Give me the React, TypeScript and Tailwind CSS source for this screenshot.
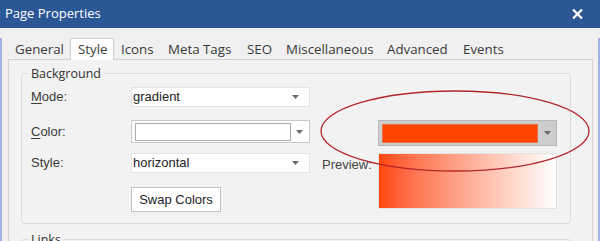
import React from "react";

const tabs = [
  { label: "General", w: "w-[62px]" },
  { label: "Style", w: "w-[44px]", active: true },
  { label: "Icons", w: "w-[47px]" },
  { label: "Meta Tags", w: "w-[79px]" },
  { label: "SEO", w: "w-[39px]" },
  { label: "Miscellaneous", w: "w-[101px]" },
  { label: "Advanced", w: "w-[76px]" },
  { label: "Events", w: "w-[60px]" },
];

function Caret({ className = "" }: { className?: string }) {
  return (
    <svg width="7" height="4" viewBox="0 0 7 4" className={className}>
      <path d="M0 0 L7 0 L3.5 4 Z" fill="#6b6b6b" />
    </svg>
  );
}

function SelectBox({ value }: { value: string }) {
  return (
    <div className="flex h-[20px] w-[179px] items-center justify-between border border-[#e3e3e3] bg-white pl-[1px] pr-[10px] text-[13px] text-[#222]">
      <span>{value}</span>
      <Caret />
    </div>
  );
}

export default function App() {
  return (
    <div className="relative h-[241px] w-[600px] overflow-hidden bg-[#f0f0f0] font-['Liberation_Sans',Arial,sans-serif]">
      {/* title bar */}
      <div className="flex h-[28px] items-center justify-between bg-[#2b5797] pl-[5px] pr-[17px] font-['Segoe_UI','Open_Sans',sans-serif] text-[13px] text-white">
        <span>Page Properties</span>
        <svg width="11" height="10" viewBox="0 0 11 10">
          <path d="M1 0.5 L10 9.5 M10 0.5 L1 9.5" stroke="white" strokeWidth="2.2" />
        </svg>
      </div>

      <div className="h-[213px] border-x-2 border-[#a3b1e3]">
        {/* tabs */}
        <div className="relative z-10 ml-[6px] mt-[10px] -mb-px flex font-['Segoe_UI','Open_Sans',sans-serif] text-[13.3px] text-[#3a3a3a]">
          {tabs.map((t) => (
            <div
              key={t.label}
              className={[
                "flex h-[22px] shrink-0 items-center pl-[7px] pt-[1px]",
                t.w,
                t.active ? "border border-b-0 border-[#d0d0d0] bg-white pl-[6px]" : "",
              ].join(" ")}
            >
              {t.label}
            </div>
          ))}
        </div>

        {/* panel */}
        <div className="ml-[6px] mr-[5px] h-[200px] border border-[#d3d3d3] bg-[#f2f2f2] pt-[6px]">
          <fieldset className="ml-[12px] mr-[21px] rounded-[3px] border border-[#dcdcdc] p-0">
            <legend className="ml-[6px] px-[3px] font-['Segoe_UI','Open_Sans',sans-serif] text-[12.5px] leading-[15px] text-[#333]">
              Background
            </legend>
            <div className="grid grid-cols-[100px_179px_68px_179px] grid-rows-[33px_33px_34px_25px] items-start pb-[11px] pl-[9px] pt-[6px] text-[13px] text-[#3a3a3a]">
              <div className="flex h-[20px] items-center">
                <span>
                  <u className="underline-offset-2">M</u>ode:
                </span>
              </div>
              <SelectBox value="gradient" />
              <div />
              <div />

              <div className="flex h-[23px] items-center">
                <span>
                  <u className="underline-offset-2">C</u>olor:
                </span>
              </div>
              <div className="flex h-[23px] w-[179px] items-center border border-[#c9c9c9] bg-white pl-[3px] pr-[6px]">
                <div className="h-[18px] w-[156px] border border-[#ababab] bg-white" />
                <Caret className="ml-auto" />
              </div>
              <div />
              <div className="flex h-[26px] w-[179px] items-center border border-[#b8b8b8] bg-[#cdcdcd] pl-[3px] pr-[5px]">
                <div className="h-[19px] w-[156px] border border-[#e8704a] bg-[#ff4500]" />
                <Caret className="ml-auto" />
              </div>

              <div className="flex h-[20px] items-center">Style:</div>
              <SelectBox value="horizontal" />
              <div className="flex h-[23px] items-center pl-[12px] text-[#444]">Preview:</div>
              <div className="row-span-2 h-[56px] w-[179px] border border-[#e2e2e2] bg-gradient-to-r from-[#ff4500] to-white" />

              <div />
              <button className="flex h-[25px] w-[90px] items-center justify-center border border-[#c4c4c4] bg-white text-[13px] text-[#222]">
                Swap Colors
              </button>
              <div />
            </div>
          </fieldset>

          <fieldset className="ml-[12px] mr-[21px] mt-[8px] h-[40px] rounded-[3px] border border-[#dcdcdc] p-0">
            <legend className="ml-[6px] px-[3px] font-['Segoe_UI','Open_Sans',sans-serif] text-[12.5px] leading-[15px] text-[#333]">
              Links
            </legend>
          </fieldset>
        </div>
      </div>

      {/* annotation ellipse */}
      <svg className="pointer-events-none absolute left-0 top-0" width="600" height="241">
        <ellipse cx="455" cy="131" rx="134" ry="40" fill="none" stroke="#b3262a" strokeWidth="1.3" />
      </svg>
    </div>
  );
}
